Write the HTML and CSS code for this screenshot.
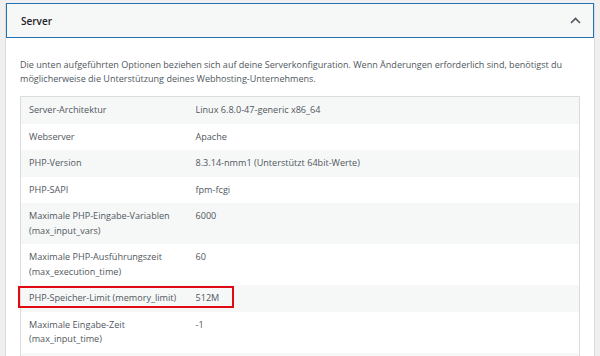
FILE: index.html
```html
<!DOCTYPE html>
<html lang="de">
<head>
    <meta charset="UTF-8">
    <title>Website-Zustand – Server</title>
    <link rel="stylesheet" href="styles.css">
</head>
<body>
    <div class="panel">
        <button class="panel-head">
            <span>Server</span>
            <svg class="chevron" width="11" height="7" viewBox="0 0 11 7">
                <path d="M1 6 L5.5 1.5 L10 6" fill="none" stroke="#50575e" stroke-width="1.6"/>
            </svg>
        </button>

        <div class="panel-body">
            <p class="intro">Die unten aufgeführten Optionen beziehen sich auf deine Serverkonfiguration. Wenn Änderungen erforderlich sind, benötigst du möglicherweise die Unterstützung deines Webhosting-Unternehmens.</p>

            <div class="table-wrap">
                <table class="info-table" id="infoTable"></table>
                <div class="marker"></div>
            </div>
        </div>
    </div>

    <script>
        const rows = [
            ["Server-Architektur", "Linux 6.8.0-47-generic x86_64"],
            ["Webserver", "Apache"],
            ["PHP-Version", "8.3.14-nmm1 (Unterstützt 64bit-Werte)"],
            ["PHP-SAPI", "fpm-fcgi"],
            ["Maximale PHP-Eingabe-Variablen (max_input_vars)", "6000"],
            ["Maximale PHP-Ausführungszeit (max_execution_time)", "60"],
            ["PHP-Speicher-Limit (memory_limit)", "512M"],
            ["Maximale Eingabe-Zeit (max_input_time)", "-1"],
            ["", ""]
        ];

        const table = document.getElementById('infoTable');
        rows.forEach(row => {
            const tr = document.createElement('tr');
            tr.innerHTML = `<td class="label">${row[0]}</td><td>${row[1]}</td>`;
            table.appendChild(tr);
        });
    </script>
</body>
</html>
```

FILE: styles.css
```css
* {
    margin: 0;
    padding: 0;
    box-sizing: border-box;
}

body {
    background-color: #f0f0f1;
    font-family: 'Open Sans', 'Noto Sans', sans-serif;
    color: #50575e;
    padding: 3px 5px 0 5px;
    height: 356px;
    overflow: hidden;
}

.panel {
    background-color: #fff;
    border-left: 1px solid #dcdcde;
    border-right: 1px solid #dcdcde;
    min-height: 400px;
}

.panel-head {
    display: flex;
    align-items: center;
    justify-content: space-between;
    width: 100%;
    height: 35px;
    padding: 0 12px 0 14px;
    background-color: #f6f7f7;
    border: 1px solid #2271b1;
    font-family: inherit;
    font-size: 10px;
    font-weight: 600;
    color: #1d2327;
    text-align: left;
    cursor: pointer;
}

.chevron {
    display: block;
}

.panel-body {
    padding: 20px 14px 0 14px;
}

.intro {
    font-size: 9.05px;
    line-height: 13.5px;
    margin-bottom: 11px;
}

.table-wrap {
    position: relative;
}

.info-table {
    width: 100%;
    border-collapse: collapse;
    border: 1px solid #dcdcde;
    font-size: 9.1px;
    line-height: 14.5px;
}

.info-table tr:nth-child(odd) {
    background-color: #f6f7f7;
}

.info-table td {
    padding: 6px 8px;
    height: 26.5px;
    vertical-align: top;
}

.info-table td.label {
    width: 167px;
    padding-right: 0;
}

.marker {
    position: absolute;
    left: -2px;
    top: 190px;
    width: 216px;
    height: 22px;
    border: 2.5px solid #e00b12;
}
```
